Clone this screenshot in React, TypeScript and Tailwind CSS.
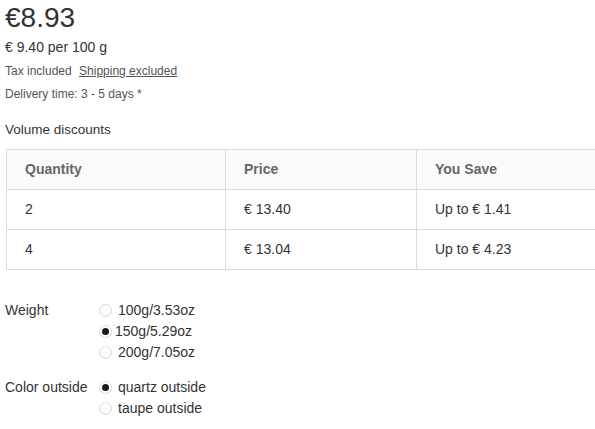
import React from 'react'

const rows = [
  { qty: '2', price: '€ 13.40', save: 'Up to € 1.41' },
  { qty: '4', price: '€ 13.04', save: 'Up to € 4.23' },
]

function Radio({ checked, label, tight }: { checked?: boolean; label: string; tight?: boolean }) {
  return (
    <label className="flex items-center h-[21px]">
      <span className="w-[13px] h-[13px] rounded-full border border-[#d9d9d9] bg-[#fdfdfd] flex items-center justify-center">
        {checked && <span className="w-[7px] h-[7px] rounded-full bg-[#1a1a1a]" />}
      </span>
      <span className={tight ? 'ml-[3px]' : 'ml-[6px]'}>{label}</span>
    </label>
  )
}

export default function App() {
  return (
    <div className="bg-white min-h-[429px] overflow-hidden pl-[5px] text-[#333] font-['Liberation_Sans',Arial,sans-serif]">
      <div className="text-[28px] leading-[36px] text-[#333]">€8.93</div>
      <div className="text-[14px] leading-[22px]">€ 9.40 per 100 g</div>
      <div className="mt-[2px] text-[12px] leading-[22px] text-[#555]">
        Tax included <a className="ml-[4px] underline text-[#555]">Shipping excluded</a>
      </div>
      <div className="mt-[1px] text-[12px] leading-[22px] text-[#555]">Delivery time: 3 - 5 days *</div>

      <div className="mt-[14px] text-[13.5px] leading-[22px]">Volume discounts</div>

      <div className="mt-[8px] ml-[1px] overflow-hidden">
        <table className="w-[602px] border-collapse text-[14px] table-fixed">
          <colgroup>
            <col className="w-[219px]" />
            <col className="w-[191px]" />
            <col className="w-[192px]" />
          </colgroup>
          <thead className="bg-[#fafafa]">
            <tr className="h-[40px]">
              <th className="border border-[#dcdcdc] px-[18px] text-left font-bold text-[#666]">Quantity</th>
              <th className="border border-[#dcdcdc] px-[18px] text-left font-bold text-[#666]">Price</th>
              <th className="border border-[#dcdcdc] px-[18px] text-left font-bold text-[#666]">You Save</th>
            </tr>
          </thead>
          <tbody>
            {rows.map((r) => (
              <tr key={r.qty} className="h-[40px]">
                <td className="border border-[#dcdcdc] px-[18px]">{r.qty}</td>
                <td className="border border-[#dcdcdc] px-[18px]">{r.price}</td>
                <td className="border border-[#dcdcdc] px-[18px]">{r.save}</td>
              </tr>
            ))}
          </tbody>
        </table>
      </div>

      <div className="mt-[30px] flex text-[14px]">
        <div className="w-[94px] leading-[21px]">Weight</div>
        <div className="flex flex-col">
          <Radio label="100g/3.53oz" />
          <Radio checked tight label="150g/5.29oz" />
          <Radio label="200g/7.05oz" />
        </div>
      </div>

      <div className="mt-[14px] flex text-[14px]">
        <div className="w-[94px] leading-[21px]">Color outside</div>
        <div className="flex flex-col">
          <Radio checked label="quartz outside" />
          <Radio label="taupe outside" />
        </div>
      </div>
    </div>
  )
}
